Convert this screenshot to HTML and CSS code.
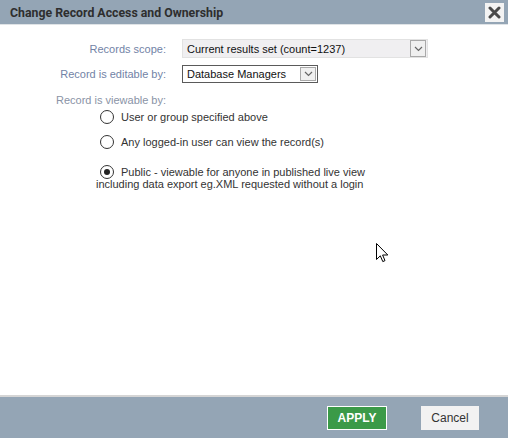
FILE: index.html
```html
<!DOCTYPE html>
<html>
<head>
<meta charset="utf-8">
<link rel="stylesheet" href="styles.css">
</head>
<body>
<div class="dialog">
  <div class="header">
    <span class="title">Change Record Access and Ownership</span>
    <span class="close"><svg width="13" height="13" viewBox="0 0 13 13"><path d="M2 2 L11 11 M11 2 L2 11" stroke="#4a4a4a" stroke-width="3" stroke-linecap="round"/></svg></span>
  </div>
  <div class="body">
    <div class="form">
      <div class="label">Records scope:</div>
      <div class="select wide"><span class="val">Current results set (count=1237)</span><span class="arrow"><svg width="9" height="6" viewBox="0 0 9 6"><path d="M1 1 L4.5 4.5 L8 1" fill="none" stroke="#666" stroke-width="1.2"/></svg></span></div>
      <div class="label">Record is editable by:</div>
      <div class="select narrow"><span class="val">Database Managers</span><span class="arrow"><svg width="9" height="6" viewBox="0 0 9 6"><path d="M1 1 L4.5 4.5 L8 1" fill="none" stroke="#666" stroke-width="1.2"/></svg></span></div>
    </div>
    <div class="viewable">Record is viewable by:</div>
    <div class="radios">
      <div class="radio"><span class="circle"></span><span>User or group specified above</span></div>
      <div class="radio"><span class="circle"></span><span>Any logged-in user can view the record(s)</span></div>
      <div class="radio last"><span class="circle on"></span><span>Public - viewable for anyone in published live view</span></div>
      <div class="cont">including data export eg.XML requested without a login</div>
    </div>
    <svg class="cursor" width="13" height="20" viewBox="0 0 13 20"><path d="M0.5 0.5 L0.5 16.5 L4.3 12.8 L6.8 18.6 L9 17.6 L6.6 12 L11.8 12 Z" fill="#fff" stroke="#000" stroke-width="1" stroke-linejoin="miter"/></svg>
  </div>
  <div class="footer">
    <button class="btn apply">APPLY</button>
    <button class="btn cancel">Cancel</button>
  </div>
</div>
</body>
</html>
```
FILE: styles.css
```css
html, body {
  margin: 0;
  padding: 0;
  height: 100%;
}
body {
  font-family: "Liberation Sans", Arial, sans-serif;
  font-size: 11px;
  color: #333;
  background: #fff;
}
.dialog {
  width: 508px;
  height: 438px;
  display: flex;
  flex-direction: column;
}
.header {
  height: 24px;
  background: #94a5b5;
  border-bottom: 1px solid #dfe3e6;
  display: flex;
  align-items: center;
  justify-content: space-between;
  padding: 0 4px 0 10px;
  box-sizing: content-box;
  flex: none;
}
.title {
  font-family: Roboto, "Liberation Sans", sans-serif;
  font-weight: bold;
  font-size: 12.3px;
  color: #2e2e2e;
  padding-top: 1px;
}
.close {
  width: 19px;
  height: 19px;
  background: #f3f3f3;
  display: flex;
  align-items: center;
  justify-content: center;
}
.body {
  flex: 1;
  position: relative;
  padding-top: 14px;
}
.form {
  display: grid;
  grid-template-columns: 166px auto;
  column-gap: 16px;
  row-gap: 7px;
  align-items: center;
}
.label {
  text-align: right;
  color: #7283a6;
}
.select {
  display: flex;
  align-items: center;
  justify-content: space-between;
  box-sizing: border-box;
  color: #111;
}
.select .val {
  padding-left: 4px;
}
.wide {
  width: 246px;
  height: 19px;
  background: #f0eff1;
  border: 1px solid #e2e2e2;
  padding-right: 1px;
}
.wide .arrow {
  width: 16px;
  height: 17px;
}
.narrow {
  width: 136px;
  height: 18px;
  background: #fff;
  border: 1px solid #5a5a5a;
  padding-right: 1px;
}
.narrow .arrow {
  width: 16px;
  height: 14px;
}
.arrow {
  box-sizing: border-box;
  border: 1px solid #a9a9a9;
  background: #f0f0f0;
  display: flex;
  align-items: center;
  justify-content: center;
}
.viewable {
  margin: 11px 0 0 56px;
  color: #8a93a6;
}
.radios {
  padding-left: 100px;
  margin-top: 3px;
}
.radio {
  display: flex;
  align-items: center;
  gap: 7px;
  height: 16px;
  margin-bottom: 9px;
}
.radio.last {
  margin-top: 14px;
  margin-bottom: 0;
}
.circle {
  width: 12px;
  height: 12px;
  border: 1px solid #333;
  border-radius: 50%;
  position: relative;
  background: #fff;
  flex: none;
}
.circle.on::after {
  content: "";
  position: absolute;
  left: 3px;
  top: 3px;
  width: 6px;
  height: 6px;
  border-radius: 50%;
  background: #222;
}
.cont {
  margin-left: -4px;
  margin-top: -2px;
}
.cursor {
  position: absolute;
  left: 376px;
  top: 218px;
}
.footer {
  height: 32px;
  background: #94a5b5;
  border-top: 2px solid #d5d5d5;
  display: flex;
  align-items: flex-start;
  justify-content: flex-end;
  padding: 9px 29px 0 0;
  box-sizing: content-box;
  gap: 34px;
  flex: none;
}
.btn {
  height: 24px;
  font-family: "Liberation Sans", Arial, sans-serif;
  font-size: 12px;
  cursor: pointer;
  padding: 0;
}
.apply {
  width: 60px;
  background: #3b9a48;
  border: 1px solid #fff;
  color: #fff;
  font-weight: bold;
}
.cancel {
  width: 58px;
  background: #f2f2f2;
  border: none;
  color: #333;
}
```
